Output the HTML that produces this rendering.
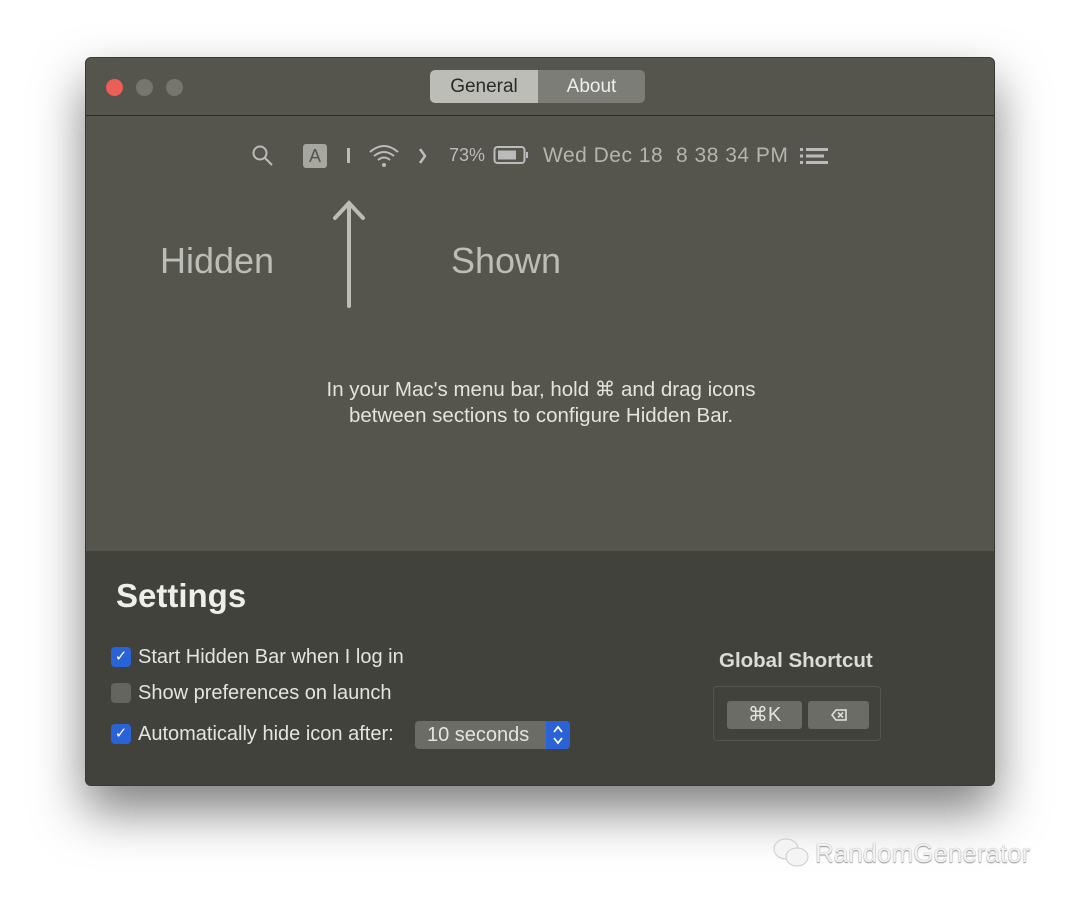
<!DOCTYPE html>
<html><head><style>
body{margin:0;width:1080px;height:899px;background:#fff;position:relative;overflow:hidden;font-family:"Liberation Sans",sans-serif}
.win{position:absolute;left:85px;top:57px;width:910px;height:729px;background:#55554e;border-radius:6px;overflow:hidden;box-shadow:0 25px 50px rgba(0,0,0,.5);border:1px solid #3a3a35;box-sizing:border-box}
.tb{position:absolute;left:0;top:0;width:100%;height:57px;border-bottom:1px solid #2b2b27}
.dot{position:absolute;top:21px;width:17px;height:17px;border-radius:50%}
.t{position:absolute;color:#ccccc6;white-space:nowrap}
.low{position:absolute;left:0;top:493px;width:100%;height:236px;background:#42423c}
.cb{position:absolute;width:20px;height:20px;border-radius:4px;background:#2a62d8;color:#fff;font-size:15px;text-align:center;line-height:20px}
</style></head><body>
<div class="win">
<div class="tb">
<div class="dot" style="left:20px;background:#ec5f57"></div>
<div class="dot" style="left:50px;background:#76766f"></div>
<div class="dot" style="left:80px;background:#76766f"></div>
<div style="position:absolute;left:344px;top:12px;width:108px;height:33px;background:#bdbdb7;border-radius:5px 0 0 5px;color:#2a2a28;font-size:19px;line-height:33px;text-align:center">General</div>
<div style="position:absolute;left:452px;top:12px;width:107px;height:33px;background:#7d7d77;border-radius:0 5px 5px 0;color:#eee;font-size:19px;line-height:33px;text-align:center">About</div>
</div>
<svg style="position:absolute;left:165px;top:86px" width="24" height="24"><circle cx="9" cy="9" r="6.5" stroke="#bbb" stroke-width="2" fill="none"/><line x1="14" y1="14" x2="21" y2="21" stroke="#bbb" stroke-width="2"/></svg>
<div style="position:absolute;left:217px;top:86px;width:24px;height:24px;background:#a7a7a1;border-radius:3px;color:#55554e;font-size:18px;text-align:center;line-height:24px">A</div>
<div style="position:absolute;left:261px;top:90px;width:3px;height:15px;background:#bbb"></div>
<svg style="position:absolute;left:282px;top:85px" width="32" height="26" viewBox="0 0 32 26"><path d="M2 9 Q16 -3 30 9 M6 13 Q16 5 26 13 M10 17 Q16 12 22 17" stroke="#bbb" stroke-width="2" fill="none"/><circle cx="16" cy="22" r="2" fill="#bbb"/></svg>
<svg style="position:absolute;left:332px;top:89px" width="10" height="18"><path d="M2 2 L7 9 L2 16" stroke="#bbb" stroke-width="2.5" fill="none"/></svg>
<div class="t" style="left:363px;top:87px;font-size:18px;color:#bbb">73%</div>
<svg style="position:absolute;left:407px;top:87px" width="38" height="20"><rect x="1.5" y="2" width="30" height="16" rx="3" stroke="#bbb" stroke-width="2" fill="none"/><rect x="5" y="5.5" width="18" height="9" fill="#bbb"/><rect x="33" y="7" width="2" height="6" fill="#bbb"/></svg>
<div class="t" style="left:457px;top:86px;font-size:21px;color:#b5b5af;letter-spacing:0.5px">Wed Dec 18</div>
<div class="t" style="left:590px;top:86px;font-size:21px;color:#b5b5af;letter-spacing:0.5px">8 38 34 PM</div>
<svg style="position:absolute;left:714px;top:89px" width="30" height="18"><g fill="#bbb"><rect x="0" y="1" width="3" height="3"/><rect x="0" y="7.5" width="3" height="3"/><rect x="0" y="14" width="3" height="3"/><rect x="6" y="1" width="22" height="3"/><rect x="6" y="7.5" width="18" height="3"/><rect x="6" y="14" width="22" height="3"/></g></svg>
<div class="t" style="left:74px;top:182px;font-size:36px;color:#bdbdb7">Hidden</div>
<div class="t" style="left:365px;top:182px;font-size:36px;color:#bdbdb7">Shown</div>
<svg style="position:absolute;left:245px;top:140px" width="36" height="112"><path d="M18 108 V6 M4 20 L18 5 L32 20" stroke="#bdbdb7" stroke-width="4" fill="none" stroke-linecap="round"/></svg>
<div class="t" style="left:0;width:910px;text-align:center;top:319px;font-size:20.5px;line-height:26px;color:#e4e4df">In your Mac's menu bar, hold ⌘ and drag icons<br>between sections to configure Hidden Bar.</div>
<div class="low">
<div class="t" style="left:30px;top:26px;font-size:33px;font-weight:bold;color:#eeeeea">Settings</div>
<div class="cb" style="left:25px;top:96px">✓</div>
<div class="t" style="left:52px;top:95px;font-size:20px;color:#e4e4df">Start Hidden Bar when I log in</div>
<div class="cb" style="left:25px;top:132px;background:#65655f"></div>
<div class="t" style="left:52px;top:131px;font-size:20px;color:#e4e4df">Show preferences on launch</div>
<div class="cb" style="left:25px;top:173px">✓</div>
<div class="t" style="left:52px;top:172px;font-size:20px;color:#e4e4df">Automatically hide icon after:</div>
<div style="position:absolute;left:329px;top:170px;width:155px;height:28px;background:#6c6c66;border-radius:4px;overflow:hidden"><div style="position:absolute;left:12px;top:3px;color:#e4e4df;font-size:20px">10 seconds</div><div style="position:absolute;right:0;top:0;width:24px;height:28px;background:#2a62d8"><svg width="24" height="28"><path d="M8 11 L12 6 L16 11 M8 17 L12 22 L16 17" stroke="#fff" stroke-width="1.8" fill="none"/></svg></div></div>
<div class="t" style="left:633px;top:98px;font-size:20.5px;font-weight:bold;color:#dcdcd6">Global Shortcut</div>
<div style="position:absolute;left:627px;top:135px;width:168px;height:55px;border:1px solid #55554f;border-radius:4px;box-sizing:border-box"></div>
<div style="position:absolute;left:641px;top:150px;width:75px;height:28px;background:#6c6c66;border-radius:3px;color:#e4e4df;font-size:20px;text-align:center;line-height:28px">⌘K</div>
<div style="position:absolute;left:722px;top:150px;width:61px;height:28px;background:#6c6c66;border-radius:3px"><svg width="61" height="28"><path d="M24 14 L28 9 H38 V19 H28 Z" stroke="#e4e4df" stroke-width="1.5" fill="none"/><path d="M30 11.5 L35 16.5 M35 11.5 L30 16.5" stroke="#e4e4df" stroke-width="1.5"/></svg></div>
</div>
</div>
<svg style="position:absolute;left:772px;top:836px" width="40" height="34"><ellipse cx="14" cy="13" rx="12" ry="10" fill="#f4f4f4" stroke="#ccc"/><ellipse cx="25" cy="21" rx="11" ry="9" fill="#f4f4f4" stroke="#ccc"/></svg>
<div class="t" style="left:815px;top:838px;font-size:26px;color:#f2f2f2;text-shadow:0 0 1px #888,0 1px 1px #999">RandomGenerator</div>
</body></html>
